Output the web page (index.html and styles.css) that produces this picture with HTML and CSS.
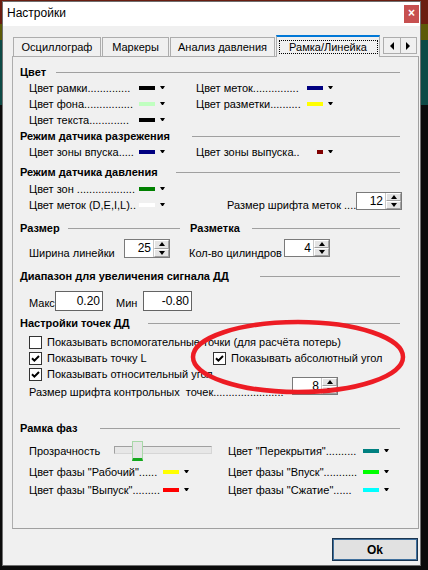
FILE: index.html
```html
<!DOCTYPE html>
<html lang="ru">
<head>
<meta charset="utf-8">
<title>Настройки</title>
<link rel="stylesheet" href="styles.css">
</head>
<body>
<div class="desktop">
  <div class="window">
    <div class="titlebar">
      <span class="title">Настройки</span>
      <span class="close">×</span>
    </div>

    <div class="tabs">
      <div class="tab t1">Осциллограф</div>
      <div class="tab t2">Маркеры</div>
      <div class="tab t3">Анализ давления</div>
      <div class="tab t4 active"><span class="focus">Рамка/Линейка</span></div>
      <div class="tab-arrows">
        <span class="tarr"><i class="tri-left"></i></span>
        <span class="tarr"><i class="tri-right"></i></span>
      </div>
    </div>

    <div class="panel">
      <div class="gt gt-color"><span class="gt-text">Цвет</span></div>
      <div class="row">
        <div class="citem w167"><span class="clabel w110">Цвет рамки..............</span><i class="sw c-black"></i><i class="dd"></i></div>
        <div class="citem"><span class="clabel w111">Цвет меток...............</span><i class="sw c-navy"></i><i class="dd"></i></div>
      </div>
      <div class="row">
        <div class="citem w167"><span class="clabel w110">Цвет фона................</span><i class="sw c-lgreen"></i><i class="dd"></i></div>
        <div class="citem"><span class="clabel w111">Цвет разметки..........</span><i class="sw c-yellow"></i><i class="dd"></i></div>
      </div>
      <div class="row">
        <div class="citem w167"><span class="clabel w110">Цвет текста.............</span><i class="sw c-black"></i><i class="dd"></i></div>
      </div>

      <div class="gt gt-vac"><span class="gt-text">Режим датчика разрежения</span></div>
      <div class="row">
        <div class="citem w167"><span class="clabel w110">Цвет зоны впуска.....</span><i class="sw c-navy"></i><i class="dd"></i></div>
        <div class="citem"><span class="clabel w121">Цвет зоны выпуска..</span><i class="sw narrow c-maroon"></i><i class="dd"></i></div>
      </div>

      <div class="gt gt-press sp-4"><span class="gt-text">Режим датчика давления</span></div>
      <div class="row sp-1">
        <div class="citem w200"><span class="clabel w110">Цвет зон ...................</span><i class="sw c-green"></i><i class="dd"></i></div>
      </div>
      <div class="row">
        <div class="citem w198"><span class="clabel w110">Цвет меток (D,E,I,L)..</span><i class="sw c-white"></i><i class="dd"></i></div>
        <span class="clabel w129">Размер шрифта меток ....</span>
        <div class="spin up5"><span class="val">12</span><span class="btns"><span class="sb"><i class="tri-up"></i></span><span class="sb"><i class="tri-down"></i></span></span></div>
      </div>

      <div class="pair sp-7">
        <div class="gt gt-size"><span class="gt-text">Размер</span></div>
        <div class="gt gt-mark"><span class="gt-text">Разметка</span></div>
      </div>
      <div class="row frow sp-3">
        <span class="flabel w95">Ширина линейки</span>
        <div class="spin h19"><span class="val">25</span><span class="btns"><span class="sb"><i class="tri-up"></i></span><span class="sb"><i class="tri-down"></i></span></span></div>
        <span class="flabel w95 ml19">Кол-во цилиндров</span>
        <div class="spin"><span class="val">4</span><span class="btns"><span class="sb"><i class="tri-up"></i></span><span class="sb"><i class="tri-down"></i></span></span></div>
      </div>

      <div class="gt gt-range sp-9"><span class="gt-text">Диапазон для увеличения сигнала ДД</span></div>
      <div class="row frow range sp-7">
        <span class="flabel w26">Макс</span>
        <span class="edit w48">0.20</span>
        <span class="flabel w27 ml13">Мин</span>
        <span class="edit w49">-0.80</span>
      </div>

      <div class="gt gt-points sp-4"><span class="gt-text">Настройки точек ДД</span></div>
      <div class="row sp-3">
        <span class="cb"></span><span class="cblabel">Показывать вспомогательные точки (для расчёта потерь)</span>
      </div>
      <div class="row">
        <div class="cbcell w184"><span class="cb checked"><svg viewBox="0 0 11 11" width="11" height="11"><path d="M2 5.2 L4.4 7.6 L9 3" fill="none" stroke="#000" stroke-width="2"/></svg></span><span class="cblabel">Показывать точку L</span></div>
        <div class="cbcell"><span class="cb checked"><svg viewBox="0 0 11 11" width="11" height="11"><path d="M2 5.2 L4.4 7.6 L9 3" fill="none" stroke="#000" stroke-width="2"/></svg></span><span class="cblabel">Показывать абсолютный угол</span></div>
      </div>
      <div class="row">
        <span class="cb checked"><svg viewBox="0 0 11 11" width="11" height="11"><path d="M2 5.2 L4.4 7.6 L9 3" fill="none" stroke="#000" stroke-width="2"/></svg></span><span class="cblabel">Показывать относительный угол</span>
      </div>
      <div class="row frow up5row">
        <span class="flabel w263 mt7">Размер шрифта контрольных&nbsp; точек.......................</span>
        <div class="spin"><span class="val">8</span><span class="btns"><span class="sb"><i class="tri-up"></i></span><span class="sb"><i class="tri-down"></i></span></span></div>
      </div>

      <div class="gt gt-phase sp-20"><span class="gt-text">Рамка фаз</span></div>
      <div class="row sp-7">
        <div class="citem w199">
          <span class="clabel w85">Прозрачность</span>
          <span class="slider"><span class="thumb"></span></span>
        </div>
        <div class="citem"><span class="clabel w135">Цвет "Перекрытия"..........</span><i class="sw c-teal"></i><i class="dd"></i></div>
      </div>
      <div class="row sp-5">
        <div class="citem w199"><span class="clabel w134">Цвет фазы "Рабочий"......</span><i class="sw c-yellow"></i><i class="dd"></i></div>
        <div class="citem"><span class="clabel w135">Цвет фазы "Впуск"...........</span><i class="sw c-lime"></i><i class="dd"></i></div>
      </div>
      <div class="row sp-2">
        <div class="citem w199"><span class="clabel w134">Цвет фазы "Выпуск".........</span><i class="sw c-red"></i><i class="dd"></i></div>
        <div class="citem"><span class="clabel w135">Цвет фазы "Сжатие"......</span><i class="sw c-cyan"></i><i class="dd"></i></div>
      </div>
    </div>

    <div class="footer">
      <button class="ok">Ok</button>
    </div>
  </div>

  <svg class="annot" width="428" height="570" viewBox="0 0 428 570">
    <ellipse cx="298" cy="357" rx="105" ry="35" fill="none" stroke="#ed1c24" stroke-width="4.5"/>
  </svg>
</div>
</body>
</html>
```

FILE: styles.css
```css
* { box-sizing: border-box; }

html, body {
  margin: 0;
  padding: 0;
}

body {
  width: 428px;
  height: 570px;
  overflow: hidden;
  font-family: "Liberation Sans", Arial, sans-serif;
  font-size: 11px;
  color: #000;
  background:
    linear-gradient(to bottom,
      #6a1d10 0, #6a1d10 24px,
      #5c5a08 24px, #5c5a08 40px,
      #0d4a46 40px, #0d4a46 105px,
      #0b0b0b 105px, #0b0b0b 100%);
}

.desktop {
  position: relative;
  width: 428px;
  height: 570px;
  padding: 1px 0 0 2px;
}

.window {
  width: 419px;
  height: 565px;
  border: 1px solid #6f6f6f;
  background: #f0f0f0;
  display: flex;
  flex-direction: column;
}

/* title bar */
.titlebar {
  height: 24px;
  flex: none;
  background: #fff;
  display: flex;
  align-items: flex-start;
}

.title {
  font-size: 12px;
  line-height: 22px;
  padding-left: 4px;
}

.close {
  margin-left: auto;
  margin-right: 1px;
  margin-top: 3px;
  width: 15px;
  height: 18px;
  background: #c75050;
  color: #fff;
  font-size: 12px;
  font-weight: bold;
  line-height: 17px;
  text-align: center;
}

/* tabs */
.tabs {
  height: 30px;
  flex: none;
  display: flex;
  align-items: flex-end;
  padding-left: 10px;
}

.tab {
  height: 19px;
  border: 1px solid #adadad;
  border-bottom: none;
  background: #f0f0f0;
  margin-right: 1px;
  display: flex;
  align-items: center;
  justify-content: center;
  white-space: nowrap;
  line-height: 14px;
}

.t1 { width: 88px; }
.t2 { width: 67px; }
.t3 { width: 105px; }
.t4 { width: 104px; }

.tab.active {
  height: 22px;
  margin-bottom: -1px;
  border-top: 2px solid #0078d7;
  position: relative;
  z-index: 1;
  padding-bottom: 1px;
}

.focus {
  display: block;
  width: 99px;
  height: 14px;
  border: 1px dotted #000;
  line-height: 12px;
  text-align: center;
}

.tab-arrows {
  align-self: flex-start;
  margin-top: 11px;
  margin-left: 2px;
  width: 34px;
  height: 17px;
  border: 1px solid #adadad;
  display: flex;
  background: #f0f0f0;
}

.tarr {
  flex: 1;
  display: flex;
  align-items: center;
  justify-content: center;
}

.tarr + .tarr { border-left: 1px solid #adadad; }

.tri-left {
  width: 0;
  height: 0;
  border-top: 4px solid transparent;
  border-bottom: 4px solid transparent;
  border-right: 4px solid #000;
}

.tri-right {
  width: 0;
  height: 0;
  border-top: 4px solid transparent;
  border-bottom: 4px solid transparent;
  border-left: 4px solid #000;
}

/* panel */
.panel {
  flex: none;
  margin-left: 9px;
  width: 407px;
  height: 473px;
  border: 1px solid #adadad;
  border-right-color: #a0a0a0;
  border-bottom-color: #a0a0a0;
  padding-top: 7px;
}

.gt {
  display: flex;
  align-items: center;
  height: 16px;
  line-height: 15px;
  font-weight: bold;
  padding-left: 7px;
  margin-right: 18px;
  white-space: nowrap;
}

.gt::after {
  content: "";
  flex: 1;
  height: 1px;
  background: #a0a0a0;
  margin-top: 1px;
}

.gt-text { flex: none; }

.gt-color .gt-text { min-width: 36px; }
.gt-vac .gt-text { min-width: 172px; }
.gt-press .gt-text { min-width: 156px; }
.gt-size .gt-text { min-width: 48px; }
.gt-mark .gt-text { min-width: 62px; }
.gt-range .gt-text { min-width: 240px; }
.gt-points .gt-text { min-width: 128px; }
.gt-phase .gt-text { min-width: 80px; }

.pair {
  display: flex;
  height: 16px;
  padding-left: 7px;
  margin-right: 18px;
}

.pair .gt {
  padding-left: 0;
  margin-right: 0;
}

.pair .gt-size { width: 160px; margin-right: 10px; }
.pair .gt-mark { flex: 1; }

.sp-1 { margin-top: 1px; }
.sp-2 { margin-top: 2px; }
.sp-3 { margin-top: 3px; }
.sp-4 { margin-top: 4px; }
.sp-5 { margin-top: 5px; }
.sp-7 { margin-top: 7px; }
.sp-9 { margin-top: 9px; }
.sp-20 { margin-top: 20px; }

.row {
  display: flex;
  align-items: flex-start;
  height: 16px;
  padding-left: 16px;
  white-space: nowrap;
}

.citem {
  display: flex;
  align-items: flex-start;
  flex: none;
}

.w167 { width: 167px; }
.w184 { width: 184px; }
.w198 { width: 198px; }
.w199 { width: 199px; }
.w200 { width: 200px; }

.clabel {
  display: block;
  flex: none;
  line-height: 16px;
  height: 16px;
  white-space: nowrap;
}

.w85 { width: 85px; }
.w110 { width: 110px; }
.w111 { width: 111px; }
.w121 { width: 121px; }
.w129 { width: 129px; }
.w134 { width: 134px; }
.w135 { width: 135px; }

.sw {
  display: block;
  width: 16px;
  height: 4px;
  margin-top: 6px;
  flex: none;
}

.sw.narrow { width: 6px; }

.dd {
  display: block;
  flex: none;
  width: 5px;
  height: 3px;
  margin-top: 6px;
  margin-left: 5px;
  border-top: 3px solid #000;
  border-left: 2px solid transparent;
  border-right: 2px solid transparent;
}

.c-black { background: #000; }
.c-navy { background: #000080; }
.c-lgreen { background: #c0ffc0; }
.c-yellow { background: #ffff00; }
.c-white { background: #fff; }
.c-green { background: #008000; }
.c-maroon { background: #800000; }
.c-teal { background: #008080; }
.c-lime { background: #00ff00; }
.c-red { background: #ff0000; }
.c-cyan { background: #00ffff; }

/* spin edits */
.spin {
  flex: none;
  display: flex;
  width: 46px;
  height: 18px;
  border: 1px solid #7a7a7a;
  background: #fff;
}

.spin.h19 { height: 19px; }
.spin.up5 { margin-top: -5px; }

.val {
  flex: 1;
  text-align: right;
  padding-right: 2px;
  font-size: 12px;
  line-height: 16px;
}

.btns {
  width: 16px;
  display: flex;
  flex-direction: column;
  border-left: 1px solid #c8c8c8;
}

.sb {
  flex: 1;
  background: #e4e4e4;
  border: 1px solid #fff;
  border-right-color: #a0a0a0;
  border-bottom-color: #a0a0a0;
  display: flex;
  align-items: center;
  justify-content: center;
}

.tri-up {
  width: 0;
  height: 0;
  border-left: 3px solid transparent;
  border-right: 3px solid transparent;
  border-bottom: 4px solid #000;
}

.tri-down {
  width: 0;
  height: 0;
  border-left: 3px solid transparent;
  border-right: 3px solid transparent;
  border-top: 4px solid #000;
}

/* field rows */
.frow { height: 20px; }

.flabel {
  flex: none;
  display: block;
  margin-top: 6px;
  line-height: 16px;
  white-space: nowrap;
}

.range .flabel { margin-top: 4px; }

.w26 { width: 26px; }
.w27 { width: 27px; }
.w95 { width: 95px; }
.w263 { width: 263px; }
.ml13 { margin-left: 13px; }
.ml19 { margin-left: 19px; }
.mt7 { margin-top: 7px; }

.edit {
  flex: none;
  display: block;
  height: 20px;
  border: 1px solid #646464;
  background: #fff;
  text-align: right;
  padding-right: 2px;
  font-size: 12px;
  line-height: 18px;
}

.w48 { width: 48px; }
.w49 { width: 49px; }

.up5row {
  margin-top: -5px;
  height: 23px;
}

/* checkboxes */
.cb {
  flex: none;
  width: 13px;
  height: 13px;
  margin-top: 2px;
  border: 1px solid #333;
  background: #fff;
  display: flex;
  align-items: center;
  justify-content: center;
}

.cbcell {
  display: flex;
  align-items: flex-start;
  flex: none;
}

.cblabel {
  margin-left: 5px;
  line-height: 16px;
}

/* slider */
.slider {
  position: relative;
  display: block;
  flex: none;
  width: 98px;
  height: 8px;
  margin-top: 3px;
  background: #e7e7e7;
  border: 1px solid #d6d6d6;
  border-top-color: #a0a0a0;
  border-left-color: #a0a0a0;
}

.thumb {
  position: absolute;
  left: 17px;
  top: -6px;
  width: 11px;
  height: 20px;
  background: #e6e6e6;
  border: 1px solid #a8d8a8;
  border-bottom: 3px solid #13a81c;
}

/* footer */
.footer {
  flex: none;
  height: 36px;
  display: flex;
  justify-content: flex-end;
  padding-top: 9px;
  padding-right: 2px;
}

.ok {
  width: 86px;
  height: 23px;
  margin: 0;
  padding: 0;
  border: 1px solid #1a3550;
  box-shadow: inset 0 0 0 1px #3f6f9c;
  background: #e1e1e1;
  font-family: "Liberation Sans", Arial, sans-serif;
  font-size: 12px;
  font-weight: bold;
  color: #000;
}

.annot {
  position: absolute;
  left: 0;
  top: 0;
  pointer-events: none;
}
```
